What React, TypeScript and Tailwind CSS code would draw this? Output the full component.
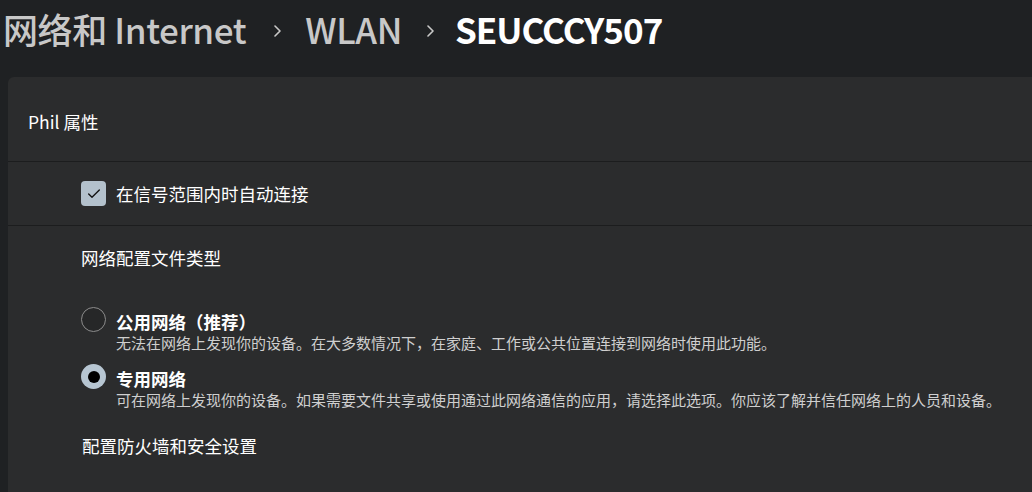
import { Check } from "lucide-react";

const FONT = "font-['Segoe_UI','Noto_Sans_CJK_SC',sans-serif]";

function Chevron() {
  return (
    <svg width="10" height="12" viewBox="0 0 10 12" className="mt-[3px] shrink-0">
      <path d="M3 1 L8 6 L3 11" fill="none" stroke="#c8c8c8" strokeWidth="1.6" strokeLinecap="round" strokeLinejoin="round" />
    </svg>
  );
}

function Radio({ checked }: { checked: boolean }) {
  if (checked) {
    return (
      <div className="w-[25px] h-[25px] rounded-full bg-[#b7c6d2] flex items-center justify-center shrink-0">
        <div className="w-[12px] h-[12px] rounded-full bg-black" />
      </div>
    );
  }
  return <div className="w-[25px] h-[25px] rounded-full border-[1.5px] border-[#8c8c8c] bg-[#262728] shrink-0" />;
}

function Option({
  checked,
  label,
  desc,
}: {
  checked: boolean;
  label: string;
  desc: string;
}) {
  return (
    <div className="flex gap-[10px]">
      <Radio checked={checked} />
      <div className="pt-[3px]">
        <div className="text-[17.5px] leading-[24px] font-bold text-white">{label}</div>
        <div className="text-[15px] leading-[18px] text-[#cfcfcf] whitespace-nowrap">{desc}</div>
      </div>
    </div>
  );
}

export default function App() {
  return (
    <div className={`w-[1032px] h-[492px] overflow-hidden bg-[#1f2123] flex flex-col ${FONT}`}>
      {/* breadcrumb header */}
      <div className="h-[58px] mb-[19px] flex items-center pl-[3px] text-[35px] leading-[44px] whitespace-nowrap">
        <span className="text-[#c8c8c8] font-medium tracking-[-0.4px]">网络和 Internet</span>
        <span className="ml-[26px] mr-[23px]"><Chevron /></span>
        <span className="text-[#c8c8c8] font-medium tracking-[-0.4px]">WLAN</span>
        <span className="ml-[23px] mr-[20px]"><Chevron /></span>
        <span className="text-white font-bold tracking-[-1px]">SEUCCCY507</span>
      </div>

      {/* card */}
      <div className="ml-[8px] flex-1 rounded-tl-[6px] bg-[#2b2c2d] text-white">
        <div className="h-[85px] pt-[6px] pl-[20px] flex items-center border-b border-[#1c1d1e] text-[17.5px]">
          Phil 属性
        </div>

        <div className="h-[64px] pl-[73px] flex items-center gap-[10px] border-b border-[#1c1d1e]">
          <div className="w-[25px] h-[25px] rounded-[4px] bg-[#b3c1cc] flex items-center justify-center">
            <Check size={16} strokeWidth={2} color="#111" />
          </div>
          <span className="text-[17.5px] leading-[24px]">在信号范围内时自动连接</span>
        </div>

        <div className="pl-[73px] pt-[20px] flex flex-col">
          <div className="text-[17.5px] leading-[24px]">网络配置文件类型</div>
          <div className="mt-[37px] flex flex-col gap-[12px]">
            <Option
              checked={false}
              label="公用网络（推荐）"
              desc="无法在网络上发现你的设备。在大多数情况下，在家庭、工作或公共位置连接到网络时使用此功能。"
            />
            <Option
              checked
              label="专用网络"
              desc="可在网络上发现你的设备。如果需要文件共享或使用通过此网络通信的应用，请选择此选项。你应该了解并信任网络上的人员和设备。"
            />
          </div>
          <div className="mt-[25px] ml-[1px] text-[17.5px] leading-[24px]">配置防火墙和安全设置</div>
        </div>
      </div>
    </div>
  );
}
